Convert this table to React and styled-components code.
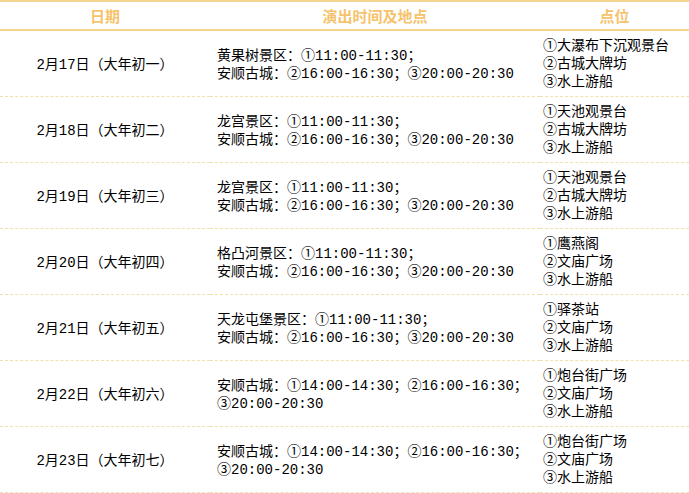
import React from "react";
import styled, { createGlobalStyle } from "styled-components";

const GlobalStyle = createGlobalStyle`
  html, body {
    margin: 0;
    padding: 0;
    background: #ffffff;
  }
  * {
    box-sizing: border-box;
  }
`;

const rows = [
  {
    date: "2月17日（大年初一）",
    times: ["黄果树景区：①11:00-11:30；", "安顺古城：②16:00-16:30；③20:00-20:30"],
    spots: ["①大瀑布下沉观景台", "②古城大牌坊", "③水上游船"],
  },
  {
    date: "2月18日（大年初二）",
    times: ["龙宫景区：①11:00-11:30；", "安顺古城：②16:00-16:30；③20:00-20:30"],
    spots: ["①天池观景台", "②古城大牌坊", "③水上游船"],
  },
  {
    date: "2月19日（大年初三）",
    times: ["龙宫景区：①11:00-11:30；", "安顺古城：②16:00-16:30；③20:00-20:30"],
    spots: ["①天池观景台", "②古城大牌坊", "③水上游船"],
  },
  {
    date: "2月20日（大年初四）",
    times: ["格凸河景区：①11:00-11:30；", "安顺古城：②16:00-16:30；③20:00-20:30"],
    spots: ["①鹰燕阁", "②文庙广场", "③水上游船"],
  },
  {
    date: "2月21日（大年初五）",
    times: ["天龙屯堡景区：①11:00-11:30；", "安顺古城：②16:00-16:30；③20:00-20:30"],
    spots: ["①驿茶站", "②文庙广场", "③水上游船"],
  },
  {
    date: "2月22日（大年初六）",
    times: ["安顺古城：①14:00-14:30；②16:00-16:30；", "③20:00-20:30"],
    spots: ["①炮台街广场", "②文庙广场", "③水上游船"],
  },
  {
    date: "2月23日（大年初七）",
    times: ["安顺古城：①14:00-14:30；②16:00-16:30；", "③20:00-20:30"],
    spots: ["①炮台街广场", "②文庙广场", "③水上游船"],
  },
];

const Table = styled.div`
  width: 689px;
  display: grid;
  grid-template-columns: 210px 330px 1fr;
  font-family: "Liberation Mono", "Noto Sans CJK SC", monospace;
  font-size: 14px;
  color: #000;
`;

const HeadCell = styled.div`
  height: 31px;
  border-top: 2px solid #f2d48f;
  border-bottom: 2px solid #f2d48f;
  display: flex;
  align-items: center;
  justify-content: center;
  font-family: "Noto Sans CJK SC", sans-serif;
  font-weight: bold;
  font-size: 15px;
  color: #f6c36c;
`;

const Cell = styled.div`
  height: 66px;
  border-bottom: 1px dashed #efe2ae;
  display: flex;
  flex-direction: column;
  justify-content: center;
  align-items: ${(p) => (p.center ? "center" : "flex-start")};
  padding-left: ${(p) => p.pad || 0}px;
  padding-top: ${(p) => p.top || 0}px;
  line-height: 18px;
  white-space: nowrap;
`;

export default function App() {
  return (
    <>
      <GlobalStyle />
      <Table>
        <HeadCell>日期</HeadCell>
        <HeadCell>演出时间及地点</HeadCell>
        <HeadCell>点位</HeadCell>
        {rows.map((r) => (
          <React.Fragment key={r.date}>
            <Cell center top={2}>{r.date}</Cell>
            <Cell pad={7} top={2}>
              {r.times.map((t) => (
                <span key={t}>{t}</span>
              ))}
            </Cell>
            <Cell pad={3}>
              {r.spots.map((s) => (
                <span key={s}>{s}</span>
              ))}
            </Cell>
          </React.Fragment>
        ))}
      </Table>
    </>
  );
}
